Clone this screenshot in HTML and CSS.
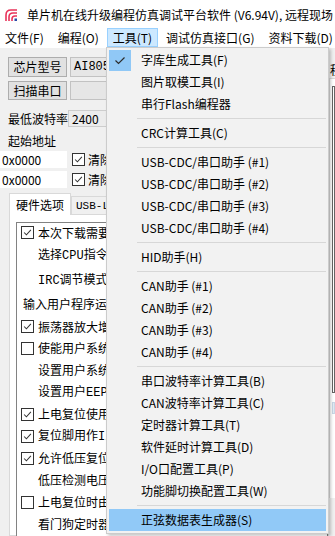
FILE: index.html
```html
<!DOCTYPE html>
<html lang="zh-CN">
<head>
<meta charset="utf-8">
<title>STC-ISP</title>
<link rel="stylesheet" href="styles.css">
</head>
<body>
<div class="win">
  <div class="titlebar">
    <svg class="appicon" width="12" height="12" viewBox="0 0 12 12">
      <path d="M1 12 V6 Q1 1 6 1 H12" fill="none" stroke="#e8335a" stroke-width="1.6"/>
      <path d="M4 12 V8 Q4 4 8 4 H12" fill="none" stroke="#e8335a" stroke-width="1.6"/>
      <path d="M7 12 V10 Q7 7 10 7 H12" fill="none" stroke="#e8335a" stroke-width="1.6"/>
      <rect x="9.5" y="9.5" width="2.5" height="2.5" fill="#2a4aa8"/>
    </svg>
    <span class="title">单片机在线升级编程仿真调试平台软件 (V6.94V), 远程现场</span>
  </div>
  <div class="menubar">
    <span class="mi first">文件(F)</span>
    <span class="mi">编程(O)</span>
    <span class="mi active">工具(T)</span>
    <span class="mi">调试仿真接口(G)</span>
    <span class="mi">资料下载(D)</span>
  </div>
  <div class="main">
    <div class="left">
      <div class="row r1">
        <span class="btn">芯片型号</span>
        <span class="combo mono">AI8051U</span>
      </div>
      <div class="row r2">
        <span class="btn">扫描串口</span>
        <span class="combo"></span>
      </div>
      <div class="row r3">
        <span class="lbl">最低波特率</span>
        <span class="combo light">2400</span>
      </div>
      <div class="lbl addr">起始地址</div>
      <div class="row r4">
        <span class="edit">0x0000</span>
        <span class="cb on"><svg viewBox="0 0 13 13"><path d="M2.5 6.5 L5.2 9.2 L10.5 3.5" fill="none" stroke="#333" stroke-width="1.2"/></svg></span>
        <span class="cbl">清除代码</span>
      </div>
      <div class="row r5">
        <span class="edit">0x0000</span>
        <span class="cb on"><svg viewBox="0 0 13 13"><path d="M2.5 6.5 L5.2 9.2 L10.5 3.5" fill="none" stroke="#333" stroke-width="1.2"/></svg></span>
        <span class="cbl">清除EEPROM</span>
      </div>
      <div class="tabs">
        <span class="tab sel">硬件选项</span>
        <span class="tab mono">USB-LINK1D</span>
      </div>
      <div class="tabpage">
        <div class="inner">
          <div class="opt h1"><span class="cb on"><svg viewBox="0 0 13 13"><path d="M2.5 6.5 L5.2 9.2 L10.5 3.5" fill="none" stroke="#333" stroke-width="1.2"/></svg></span><span class="ot">本次下载需要修改硬件选项</span></div>
          <div class="opt h2 ind"><span class="ot">选择<span class="mono">CPU</span>指令集</span></div>
          <div class="opt h3 ind"><span class="ot"><span class="mono">IRC</span>调节模式</span></div>
          <div class="opt h3 ind2"><span class="ot">输入用户程序运行的IRC频率</span></div>
          <div class="opt h4"><span class="cb on"><svg viewBox="0 0 13 13"><path d="M2.5 6.5 L5.2 9.2 L10.5 3.5" fill="none" stroke="#333" stroke-width="1.2"/></svg></span><span class="ot">振荡器放大增益</span></div>
          <div class="opt"><span class="cb"></span><span class="ot">使能用户系统时钟</span></div>
          <div class="opt ind"><span class="ot">设置用户系统时钟</span></div>
          <div class="opt ind"><span class="ot">设置用户<span class="mono">EEPROM</span>大小</span></div>
          <div class="opt"><span class="cb on"><svg viewBox="0 0 13 13"><path d="M2.5 6.5 L5.2 9.2 L10.5 3.5" fill="none" stroke="#333" stroke-width="1.2"/></svg></span><span class="ot">上电复位使用较长延时</span></div>
          <div class="opt"><span class="cb on"><svg viewBox="0 0 13 13"><path d="M2.5 6.5 L5.2 9.2 L10.5 3.5" fill="none" stroke="#333" stroke-width="1.2"/></svg></span><span class="ot">复位脚用作<span class="mono">I/O</span>口</span></div>
          <div class="opt"><span class="cb on"><svg viewBox="0 0 13 13"><path d="M2.5 6.5 L5.2 9.2 L10.5 3.5" fill="none" stroke="#333" stroke-width="1.2"/></svg></span><span class="ot">允许低压复位(禁止低压中断)</span></div>
          <div class="opt ind"><span class="ot">低压检测电压</span></div>
          <div class="opt"><span class="cb"></span><span class="ot">上电复位时由硬件自动启动看门狗</span></div>
          <div class="opt ind"><span class="ot">看门狗定时器分频系数</span></div>
        </div>
      </div>
    </div>
    <div class="right">
      <div class="rtab">程序文件</div>
      <div class="rpage">
        <div class="rbox"></div>
        <div class="rbar"></div>
      </div>
    </div>
  </div>

  <div class="dropdown">
    <div class="item"><span class="ic on"><svg width="22" height="21" viewBox="0 0 22 21"><path d="M6.5 10.5 L9.5 13.5 L15.5 7.5" fill="none" stroke="#2b2b2b" stroke-width="1.2"/></svg></span>字库生成工具(F)</div>
    <div class="item"><span class="ic"></span>图片取模工具(I)</div>
    <div class="item"><span class="ic"></span>串行Flash编程器</div>
    <div class="sep"><i></i></div>
    <div class="item"><span class="ic"></span>CRC计算工具(C)</div>
    <div class="sep"><i></i></div>
    <div class="item"><span class="ic"></span>USB-CDC/串口助手 (#1)</div>
    <div class="item"><span class="ic"></span>USB-CDC/串口助手 (#2)</div>
    <div class="item"><span class="ic"></span>USB-CDC/串口助手 (#3)</div>
    <div class="item"><span class="ic"></span>USB-CDC/串口助手 (#4)</div>
    <div class="sep"><i></i></div>
    <div class="item"><span class="ic"></span>HID助手(H)</div>
    <div class="sep"><i></i></div>
    <div class="item"><span class="ic"></span>CAN助手 (#1)</div>
    <div class="item"><span class="ic"></span>CAN助手 (#2)</div>
    <div class="item"><span class="ic"></span>CAN助手 (#3)</div>
    <div class="item"><span class="ic"></span>CAN助手 (#4)</div>
    <div class="sep"><i></i></div>
    <div class="item"><span class="ic"></span>串口波特率计算工具(B)</div>
    <div class="item"><span class="ic"></span>CAN波特率计算工具(C)</div>
    <div class="item"><span class="ic"></span>定时器计算工具(T)</div>
    <div class="item"><span class="ic"></span>软件延时计算工具(D)</div>
    <div class="item"><span class="ic"></span>I/O口配置工具(P)</div>
    <div class="item"><span class="ic"></span>功能脚切换配置工具(W)</div>
    <div class="sep"><i></i></div>
    <div class="item hl"><span class="ic"></span>正弦数据表生成器(S)</div>
  </div>
</div>
</body>
</html>
```
FILE: styles.css
```css
html, body {
  margin: 0;
  padding: 0;
}
body {
  width: 335px;
  height: 536px;
  overflow: hidden;
  font-family: "Noto Sans CJK SC", "Microsoft YaHei", sans-serif;
  font-size: 12px;
  color: #000;
  background: #f0f0f0;
}
.win {
  position: relative;
  width: 335px;
  height: 536px;
  overflow: hidden;
}
.mono {
  font-family: "Liberation Mono", "DejaVu Sans Mono", monospace;
  font-size: 12px;
}

/* title bar */
.titlebar {
  height: 27px;
  box-sizing: border-box;
  padding: 2px 0 0 5px;
  background: #fff;
  display: flex;
  align-items: center;
  gap: 10px;
  white-space: nowrap;
  overflow: hidden;
}
.appicon {
  flex: none;
}
.title {
  font-size: 12px;
  line-height: 16px;
}

/* menu bar */
.menubar {
  height: 21px;
  box-sizing: border-box;
  padding-top: 1px;
  background: #fff;
  display: flex;
  white-space: nowrap;
}
.mi {
  height: 19px;
  box-sizing: border-box;
  line-height: 17px;
  padding: 0 5px;
  border: 1px solid transparent;
  margin-right: 2px;
}
.mi.first {
  margin-left: -1px;
}
.mi.active {
  background: #cce8ff;
  border-color: #99d1ff;
}

/* main area */
.main {
  display: flex;
  height: 488px;
  background: #f0f0f0;
}
.left {
  width: 329px;
  flex: none;
  box-sizing: border-box;
  padding-top: 9px;
}
.row {
  display: flex;
  align-items: center;
  padding-left: 8px;
  white-space: nowrap;
}
.r1 { height: 20px; gap: 3px; }
.r2 { height: 19px; gap: 3px; margin-top: 4px; }
.r3 { height: 17px; margin-top: 10px; }
.r4 { height: 17px; margin-top: 3px; padding-left: 0; }
.r5 { height: 17px; margin-top: 3px; padding-left: 0; }
.btn {
  width: 59px;
  height: 100%;
  flex: none;
  box-sizing: border-box;
  background: #e1e1e1;
  border: 1px solid #adadad;
  display: flex;
  align-items: center;
  justify-content: center;
  line-height: 14px;
}
.combo {
  width: 160px;
  height: 100%;
  flex: none;
  box-sizing: border-box;
  background: #e6e6e6;
  border: 1px solid #c2c2c2;
  padding-left: 3px;
  display: flex;
  align-items: center;
}
.combo.light {
  background: #ececec;
  border-color: #cdcdcd;
  font-size: 12px;
}
.lbl {
  width: 60px;
  flex: none;
  line-height: 14px;
}
.addr {
  margin: 7px 0 0 8px;
  height: 14px;
}
.edit {
  width: 67px;
  height: 100%;
  flex: none;
  box-sizing: border-box;
  background: #fff;
  padding-left: 2px;
  display: flex;
  align-items: center;
  font-size: 12px;
}
.cb {
  width: 13px;
  height: 13px;
  flex: none;
  box-sizing: border-box;
  border: 1px solid #333;
  background: #fff;
  display: flex;
}
.cb svg {
  width: 11px;
  height: 11px;
}
.r4 .cb, .r5 .cb {
  margin-left: 5px;
}
.cbl {
  margin-left: 3px;
}

/* tabs */
.tabs {
  display: flex;
  align-items: flex-end;
  height: 21px;
  margin-top: 5px;
  padding-left: 9px;
  white-space: nowrap;
}
.tab {
  height: 18px;
  flex: none;
  box-sizing: border-box;
  padding: 0 4px;
  background: #f0f0f0;
  border: 1px solid #d9d9d9;
  border-bottom: none;
  display: flex;
  align-items: center;
  font-size: 11px;
}
.tab.sel {
  position: relative;
  z-index: 1;
  width: 62px;
  height: 22px;
  margin-bottom: -1px;
  background: #fff;
  justify-content: center;
  padding: 0;
  font-size: 12px;
}
.tabpage {
  margin-left: 9px;
  height: 322px;
  box-sizing: border-box;
  background: #fff;
  border: 1px solid #d9d9d9;
  padding: 7px 0 0 6px;
}
.inner {
  height: 400px;
  box-sizing: border-box;
  border: 1px solid #828282;
  background: #fff;
}
.opt {
  display: flex;
  align-items: center;
  height: 22px;
  padding-left: 4px;
  gap: 4px;
  white-space: nowrap;
}
.opt.h1 { height: 19px; }
.opt.h2 { height: 26px; }
.opt.h3 { height: 24px; }
.opt.h4 { height: 21px; }
.opt.ind { padding-left: 21px; }
.opt.ind2 { padding-left: 6px; }
.ot {
  line-height: 14px;
}

/* right sliver */
.right {
  flex: 1;
  min-width: 0;
  overflow: hidden;
  padding-top: 13px;
}
.rtab {
  height: 17px;
  line-height: 17px;
  padding-left: 1px;
  white-space: nowrap;
}
.rpage {
  height: 420px;
  box-sizing: border-box;
  background: #fff;
  border-top: 1px solid #d9d9d9;
  border-left: 1px solid #d9d9d9;
  padding: 7px 0 0 2px;
}
.rbox {
  height: 307px;
  box-sizing: border-box;
  border: 1px solid #646464;
  background: #fff;
}
.rbar {
  height: 10px;
  margin-top: 9px;
  background: #e3ecf5;
  border: 1px solid #c9d7e6;
}

/* dropdown menu */
.dropdown {
  position: absolute;
  left: 106px;
  top: 47px;
  width: 223px;
  box-sizing: border-box;
  background: #f2f2f2;
  border: 1px solid #cccccc;
  padding: 1px 2px 2px 2px;
  box-shadow: 2px 2px 3px rgba(0, 0, 0, 0.22);
  z-index: 5;
}
.item {
  height: 22px;
  display: flex;
  align-items: center;
  white-space: nowrap;
  line-height: 16px;
}
.item.hl {
  background: #91c9f7;
}
.ic {
  width: 22px;
  height: 21px;
  margin-right: 10px;
  flex: none;
  display: flex;
}
.ic.on {
  background: #90c8f6;
}
.sep {
  height: 7px;
  display: flex;
  align-items: center;
  padding-left: 28px;
}
.sep i {
  display: block;
  flex: 1;
  height: 1px;
  background: #d7d7d7;
}
```
